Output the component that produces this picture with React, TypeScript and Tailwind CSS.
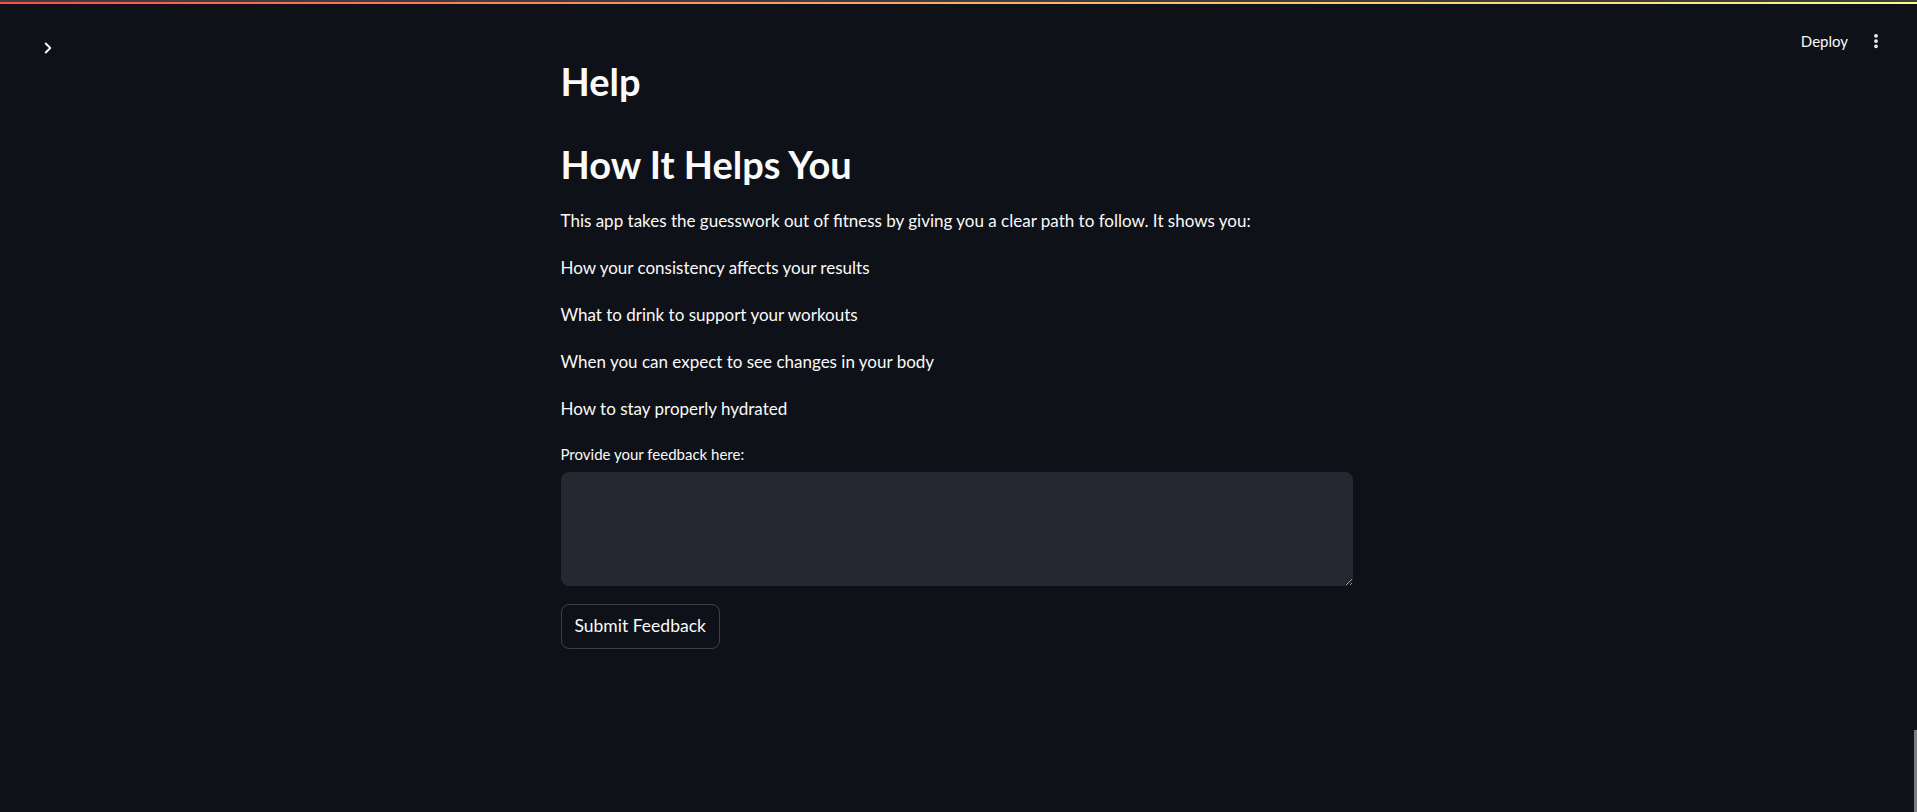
import { ChevronRight, EllipsisVertical } from "lucide-react";

const points = [
  "How your consistency affects your results",
  "What to drink to support your workouts",
  "When you can expect to see changes in your body",
  "How to stay properly hydrated",
];

export default function App() {
  return (
    <div className="relative min-h-[812px] bg-[#0e1117] text-[#fafafa] font-['Lato','Liberation_Sans',sans-serif] overflow-hidden">
      {/* top decoration */}
      <div className="h-[2px] bg-[#3a3d44]" />
      <div className="h-[2px] bg-gradient-to-r from-[#ff4b4b] to-[#fffd80]" />

      {/* header */}
      <div className="absolute left-0 right-0 top-[4px] flex items-start justify-between">
        <button className="mt-[35px] ml-[39px] text-[#fafafa]">
          <ChevronRight size={18} strokeWidth={2.5} />
        </button>
        <div className="mt-[26px] mr-[32px] flex items-center gap-[19px]">
          <span className="text-[15px]">Deploy</span>
          <EllipsisVertical size={18} strokeWidth={3} />
        </div>
      </div>

      {/* main */}
      <main className="mx-auto w-[792px] pt-[54px] -translate-x-[2px]">
        <h1 className="text-[38px] leading-[46px] font-bold">Help</h1>
        <h2 className="mt-[37px] text-[38px] leading-[46px] font-bold">How It Helps You</h2>
        <p className="mt-[20px] text-[17px] leading-[27px]">
          This app takes the guesswork out of fitness by giving you a clear path to follow. It shows you:
        </p>
        {points.map((p) => (
          <p key={p} className="mt-[20px] text-[17px] leading-[27px]">
            {p}
          </p>
        ))}
        <label className="mt-[22px] block text-[15px] leading-[20px]">Provide your feedback here:</label>
        <textarea className="mt-[8px] block h-[114px] w-full resize-y rounded-[8px] bg-[#262730] px-3 py-2 text-[16px] outline-none [color-scheme:dark]" />
        <button className="mt-[18px] h-[45px] rounded-[8px] border border-[rgba(250,250,250,0.2)] px-[13px] text-[17.5px]">
          Submit Feedback
        </button>
      </main>

      {/* scrollbar thumb */}
      <div className="absolute right-0 bottom-0 h-[82px] w-[3px] bg-[#7b7d82]" />
    </div>
  );
}
